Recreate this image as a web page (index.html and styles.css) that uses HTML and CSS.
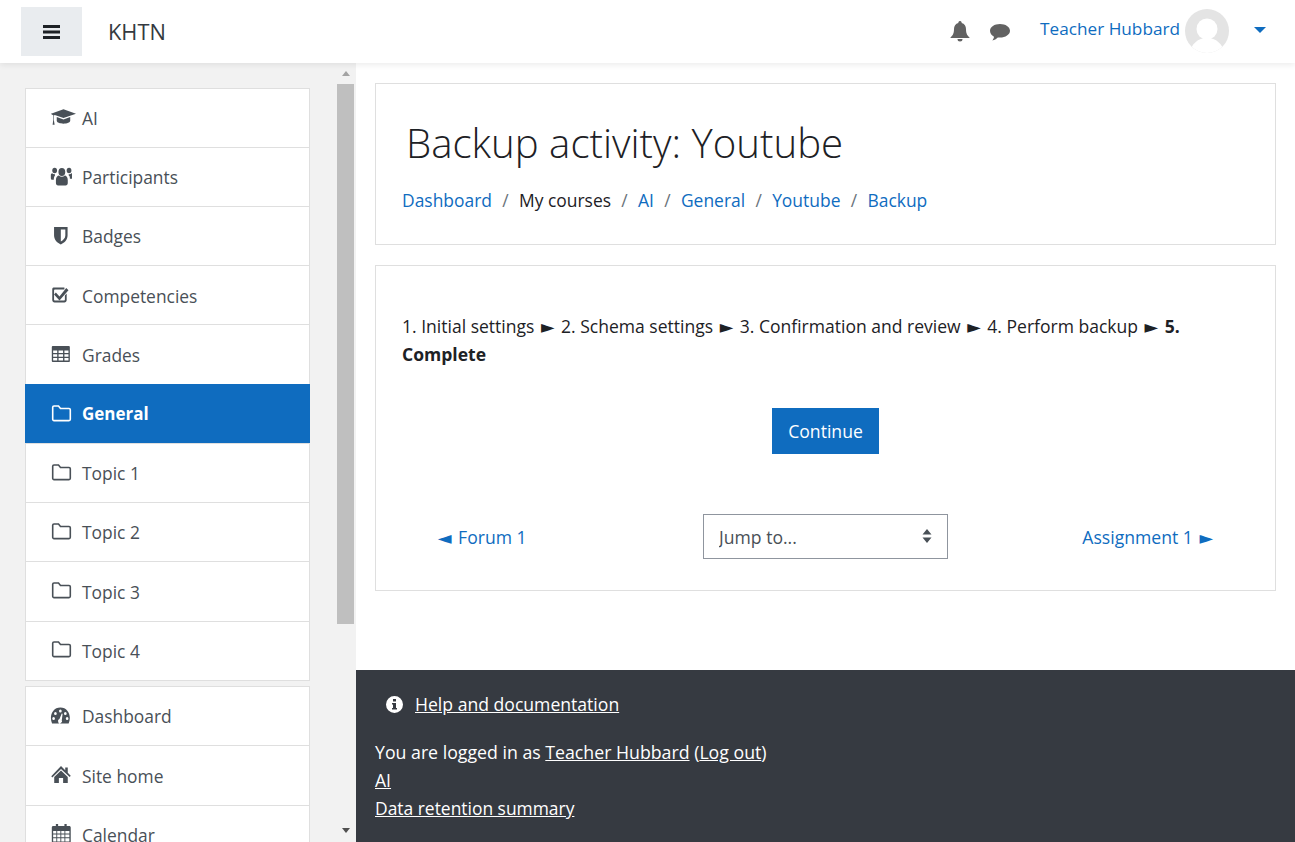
FILE: index.html
```html
<!DOCTYPE html>
<html>
	<head>
		<meta charset="utf-8">
		<title>Backup activity: Youtube</title>
		<link rel="stylesheet" href="styles.css">
	</head>
	<body>
		<header class="topbar">
			<button class="menu-btn" type="button">
				<svg width="17" height="14" viewBox="0 0 17 14"><path d="M0 0h17v3H0zM0 5.500h17v3H0zM0 11h17v3H0z" fill="#1d2125"/></svg>
			</button>
			<span class="brand">KHTN</span>
			<div class="top-right">
				<svg class="top-icon" width="20" height="21" viewBox="0 0 20 21"><path d="M10 0a1.600 1.600 0 0 1 1.600 2.100C14.600 2.800 16 5.200 16 8c0 5 1.500 6.500 3.500 8.500V17H.5v-.5C2.500 14.500 4 13 4 8c0-2.800 1.400-5.200 4.400-5.900A1.600 1.600 0 0 1 10 0zM7.500 18h5a2.500 2.500 0 0 1-5 0z" fill="#626262"/></svg>
				<svg class="top-icon chat" width="20" height="17" viewBox="0 0 20 17"><path d="M10 0c5.500 0 10 2.900 10 6.800s-4.500 6.800-10 6.800c-.8 0-1.500-.1-2.200-.2C6.300 14.800 4.500 16 2.300 16.500c.8-1 1.500-2 1.700-3.700C1.600 11.500 0 9.300 0 6.800 0 2.900 4.500 0 10 0z" fill="#626262"/></svg>
				<a class="user-name" href="#">Teacher Hubbard</a>
				<svg class="avatar" width="44" height="44" viewBox="0 0 44 44"><defs><clipPath id="av"><circle cx="22" cy="22" r="22"/></clipPath></defs><circle cx="22" cy="22" r="22" fill="#e4e4e4"/><g clip-path="url(#av)" fill="#fff"><circle cx="22" cy="20" r="10.500"/><path d="M5 44c1-9 8-15 17-15s16 6 17 15z"/></g></svg>
				<span class="caret"></span>
			</div>
		</header>

		<div class="page">
			<aside class="sidebar">
				<div class="side-lists">
					<ul class="side-card">
						<li><svg class="ico cap" width="26" height="19" viewBox="-1 0 27 19"><path d="M13 1 26 5.500 13 10 4 6.900 3 7.400V12l.8 5H1.700l.7-5V7C1.500 6.700.5 6 0 5.500zM6 9l7 2.500L20 9v4c0 1.800-3.500 3-7 3s-7-1.200-7-3z"/></svg>AI</li>
						<li><svg class="ico" width="22" height="19" viewBox="-1 0 26 19" preserveAspectRatio="none"><circle cx="13" cy="5" r="4"/><circle cx="4.500" cy="3.500" r="2.800"/><circle cx="21.500" cy="3.500" r="2.800"/><path d="M6 13c0-3 2-4.500 3.500-4.500 1 .8 2.200 1.200 3.500 1.200s2.500-.4 3.500-1.200C18 8.500 20 10 20 13v3c0 1.500-1 2.500-2.500 2.500h-9C7 18.500 6 17.500 6 16zM0 8c0-1 .8-1.800 1.500-1.800 1 1 2.500 1.300 3.500 1-.3.900-.1.900-.1 1.300C3.500 9.500 3.500 12 3.500 12.800H1.500C.5 12.800 0 12 0 11zM26 8c0-1-.8-1.800-1.500-1.800-1 1-2.500 1.300-3.500 1 .3.900.1.900.1 1.300 1.400 0 1.400 2.500 1.400 3.300h2c1 0 1.500-.8 1.500-1.800z"/></svg>Participants</li>
						<li><svg class="ico" width="22" height="19" viewBox="0 0 24.400 19" preserveAspectRatio="none"><path d="M4.500 1h15v8.500c0 4.500-4 7.500-7.500 9-3.500-1.500-7.500-4.500-7.500-9zM12 3.500v12c2.500-1.300 5-3.300 5-6V3.500z"/></svg>Badges</li>
						<li><svg class="ico" width="22" height="19" viewBox="1 0 24.400 19" preserveAspectRatio="none"><path d="M5 2.500h12v2H6.500C6 4.500 5.500 5 5.500 5.500v9c0 .6.500 1 1 1h10c.6 0 1-.4 1-1v-4l2-2v6.500c0 1.400-1.100 2.500-2.500 2.500H6c-1.400 0-2.500-1.100-2.500-2.500V5C3.500 3.600 3.600 2.500 5 2.500z"/><path d="m7.500 7.500 4 4 7.500-8.500 2.500 2.200L11.500 15.500 5.500 9.500z"/></svg>Competencies</li>
						<li><svg class="ico" width="22" height="19" viewBox="1 0 24.400 19" preserveAspectRatio="none"><path fill-rule="evenodd" d="M4 2h18c.6 0 1 .4 1 1v14c0 .6-.4 1-1 1H4c-.6 0-1-.4-1-1V3c0-.6.400-1 1-1zM4.500 6.500v2.500H9V6.500zm6 0v2.500h5V6.500zm6.500 0v2.500h4.500V6.500zM4.500 10.300v2.500H9v-2.500zm6 0v2.500h5v-2.500zm6.500 0v2.500h4.500v-2.500zM4.500 14v2.500H9V14zm6 0v2.500h5V14zm6.500 0v2.500h4.500V14z"/></svg>Grades</li>
						<li class="active"><svg class="ico" width="22" height="19" viewBox="0 0 22 19"><path class="folder" d="M4 2h4.500l2 2.500h8.500c.7 0 1.300.6 1.300 1.300v9.500c0 .7-.6 1.300-1.300 1.300H4c-.7 0-1.300-.6-1.300-1.300V3.300C2.700 2.600 3.300 2 4 2z"/></svg>General</li>
						<li><svg class="ico" width="22" height="19" viewBox="0 0 22 19"><path class="folder" d="M4 2h4.500l2 2.500h8.500c.7 0 1.300.6 1.300 1.300v9.500c0 .7-.6 1.300-1.300 1.300H4c-.7 0-1.300-.6-1.300-1.300V3.300C2.700 2.600 3.300 2 4 2z"/></svg>Topic 1</li>
						<li><svg class="ico" width="22" height="19" viewBox="0 0 22 19"><path class="folder" d="M4 2h4.500l2 2.500h8.500c.7 0 1.300.6 1.300 1.300v9.500c0 .7-.6 1.300-1.300 1.300H4c-.7 0-1.300-.6-1.300-1.300V3.300C2.700 2.600 3.300 2 4 2z"/></svg>Topic 2</li>
						<li><svg class="ico" width="22" height="19" viewBox="0 0 22 19"><path class="folder" d="M4 2h4.500l2 2.500h8.500c.7 0 1.300.6 1.300 1.300v9.500c0 .7-.6 1.300-1.300 1.300H4c-.7 0-1.300-.6-1.300-1.300V3.300C2.700 2.600 3.300 2 4 2z"/></svg>Topic 3</li>
						<li><svg class="ico" width="22" height="19" viewBox="0 0 22 19"><path class="folder" d="M4 2h4.500l2 2.500h8.500c.7 0 1.300.6 1.300 1.300v9.500c0 .7-.6 1.300-1.300 1.300H4c-.7 0-1.300-.6-1.300-1.300V3.300C2.700 2.600 3.300 2 4 2z"/></svg>Topic 4</li>
					</ul>
					<ul class="side-card site-card">
						<li><svg class="ico" width="22" height="19" viewBox="1.500 0 24.400 19" preserveAspectRatio="none"><path fill-rule="evenodd" d="M13 1.500c6.600 0 10.500 5 10.500 10.500 0 2-.5 3.800-1.300 5.500H3.800C3 15.800 2.500 14 2.500 12 2.500 6.500 6.400 1.500 13 1.500zM13 3.500a1.500 1.500 0 1 0 0 3 1.500 1.500 0 0 0 0-3zM7.500 6a1.500 1.500 0 1 0 0 3 1.500 1.500 0 0 0 0-3zM18.500 6a1.500 1.500 0 1 0 0 3 1.500 1.500 0 0 0 0-3zM5.500 11a1.500 1.500 0 1 0 0 3 1.500 1.500 0 0 0 0-3zM20.500 11a1.500 1.500 0 1 0 0 3 1.500 1.500 0 0 0 0-3zM14.500 7.500 12 13a2.200 2.200 0 1 0 2.500 1 .5.500 0 0 0 .2-.5l.8-5.800z"/></svg>Dashboard</li>
						<li><svg class="ico" width="22" height="19" viewBox="0 0 26 19" preserveAspectRatio="none"><path d="M13 1 18 5.200V2.500h3v5.200l3.500 3-1.200 1.300L13 4 2.700 12.500 1.500 11.200zM13 5.500l8 6.500v6h-5.500v-5h-5v5H5v-6z"/></svg>Site home</li>
						<li><svg class="ico" width="22" height="19" viewBox="0.500 0 24.400 19" preserveAspectRatio="none"><path fill-rule="evenodd" d="M7 0h2.500v2h7V0H19v2h3c.8 0 1.500.7 1.500 1.500v14c0 .8-.7 1.500-1.500 1.500H4c-.8 0-1.500-.7-1.500-1.500v-14C2.500 2.700 3.200 2 4 2h3zM4 7v2.500h3.500V7zm4.500 0v2.500H12V7zM13 7v2.500h3.500V7zm4.500 0v2.500H22V7zM4 10.500v2.800h3.500v-2.800zm4.500 0v2.800H12v-2.800zm4.500 0v2.800h3.500v-2.800zm4.500 0v2.800H22v-2.800zM4 14.300v3.200h3.500v-3.200zm4.500 0v3.200H12v-3.200zm4.500 0v3.200h3.500v-3.200zm4.500 0v3.200H22v-3.200z"/></svg>Calendar</li>
					</ul>
				</div>
				<div class="scrollbar">
					<span class="sb-up"></span>
					<div class="sb-track"><div class="sb-thumb"></div></div>
					<span class="sb-down"></span>
				</div>
			</aside>

			<div class="main-col">
				<main class="content">
					<section class="card head-card">
						<h1>Backup activity: Youtube</h1>
						<nav class="crumbs">
							<a href="#">Dashboard</a><span class="sep">/</span><span>My courses</span><span class="sep">/</span><a href="#">AI</a><span class="sep">/</span><a href="#">General</a><span class="sep">/</span><a href="#">Youtube</a><span class="sep">/</span><a href="#">Backup</a>
						</nav>
					</section>
					<section class="card body-card">
						<p class="steps">1. Initial settings <span class="arr">►</span> 2. Schema settings <span class="arr">►</span> 3. Confirmation and review <span class="arr">►</span> 4. Perform backup <span class="arr">►</span> <b>5.</b> <b>Complete</b></p>
						<div class="btn-row"><button class="btn" type="button">Continue</button></div>
						<div class="jump-row">
							<a href="#" class="prev"><span class="arr">◄</span> Forum 1</a>
							<div class="select-wrap">
								<select class="jump"><option>Jump to...</option></select>
								<svg class="sel-arrows" width="10" height="14" viewBox="0 0 10 14"><path d="M5 0l4.500 5.500h-9zM5 14 .5 8.500h9z" fill="#495057"/></svg>
							</div>
							<a href="#" class="next">Assignment 1 <span class="arr">►</span></a>
						</div>
					</section>
				</main>
				<footer class="footer">
					<div class="help">
						<svg width="17" height="17" viewBox="0 0 17 17"><path fill-rule="evenodd" d="M8.500 0a8.500 8.500 0 1 1 0 17 8.500 8.500 0 0 1 0-17zM7 3v2.500h3V3zM6 7v1.500h1V12H6v1.500h5V12h-1V7z" fill="#fff"/></svg>
						<a href="#">Help and documentation</a>
					</div>
					<div class="login-info">You are logged in as <a href="#">Teacher Hubbard</a> (<a href="#">Log out</a>)</div>
					<div><a href="#">AI</a></div>
					<div class="retention"><a href="#">Data retention summary</a></div>
				</footer>
			</div>
		</div>
	</body>
</html>
```

FILE: styles.css
```css
*{margin: 0;padding: 0;box-sizing: border-box;}
ul{list-style: none;}
a{color: #0f6cbf;text-decoration: none;}
html,body{height: 100%;overflow: hidden;}
body{
	display: flex;
	flex-direction: column;
	font-family: "Open Sans","Noto Sans",sans-serif;
	font-size: 17.6px;
	line-height: 28.125px;
	color: #1d2125;
	background: #fff;
}

/* top bar */
.topbar{
	height: 63px;
	flex: none;
	display: flex;
	align-items: center;
	padding-left: 21px;
	background: #fff;
	box-shadow: 0 2px 6px rgba(0,0,0,0.08);
	position: relative;
	z-index: 5;
}
.menu-btn{width: 61px;height: 49px;border: 0;background: #e9ecef;display: flex;align-items: center;justify-content: center;}
.brand{margin-left: 26px;margin-top: 2px;font-size: 21.8px;color: #343a40;}
.top-right{margin-left: auto;display: flex;align-items: center;}
.top-icon{display: block;}
.chat{margin-left: 20px;margin-top: 2px;}
.user-name{margin-left: 30px;margin-top: -4px;font-size: 17.2px;}
.avatar{margin-left: 5px;margin-top: -2px;}
.caret{margin-left: 25px;margin-right: 29px;margin-top: -4px;width: 0;height: 0;border-left: 6.500px solid transparent;border-right: 6.500px solid transparent;border-top: 6px solid #0f6cbf;}

.page{flex: 1;display: flex;min-height: 0;}

/* sidebar */
.sidebar{width: 356px;flex: none;display: flex;background: #f2f2f2;overflow: hidden;}
.side-lists{width: 337px;flex: none;padding: 25px 27px 0 25px;}
.side-card{background: #fff;border: 1px solid #dfdfdf;margin-bottom: 5px;}
.side-card li{
	display: flex;
	align-items: center;
	height: 59.22px;
	padding-left: 24px;
	padding-top: 0.6px;
	border-top: 1px solid #dfdfdf;
	color: #495057;
	font-size: 17.4px;
}
.side-card li:first-child{border-top: 0;height: 57.8px;}
.site-card li:first-child{height: 58.6px;}
.side-card .active{background: #0f6cbf;color: #fff;font-weight: 700;font-size: 17px;margin: 0 -1px;padding-left: 25px;border-top-color: #0f6cbf;}
.ico{flex: none;margin-right: 10px;margin-top: -2px;fill: #495057;}
.cap{margin-right: 6px;}
.folder{fill: none;stroke: #495057;stroke-width: 1.600;}
.active .folder{stroke: #fff;}

.scrollbar{width: 17px;flex: none;display: flex;flex-direction: column;align-items: stretch;}
.sb-track{flex: 1;}
.sb-thumb{height: 540px;background: #bfbfbf;}
.sb-up,.sb-down{flex: none;display: flex;justify-content: center;align-items: center;}
.sb-up{height: 21px;}
.sb-down{height: 24px;}
.sb-up::before{content: "";border-left: 4.500px solid transparent;border-right: 4.500px solid transparent;border-bottom: 5px solid #a3a3a3;}
.sb-down::before{content: "";border-left: 4.500px solid transparent;border-right: 4.500px solid transparent;border-top: 5px solid #505050;}

/* main column */
.main-col{flex: 1;min-width: 0;display: flex;flex-direction: column;}
.content{flex: 1;padding: 20px 19px 0;}
.card{border: 1px solid #dfdfdf;background: #fff;}
.head-card{height: 162px;padding: 30px 26px 0 30px;margin-bottom: 20px;}
h1{font-size: 40.2px;font-weight: 300;line-height: 58px;color: #1d2125;}
.crumbs{margin-top: 14px;margin-left: -4px;font-size: 17.45px;color: #1d2125;}
.sep{margin: 0 10.300px;color: #6a737b;}
.body-card{height: 326px;padding: 46px 26px 0;}
.steps{line-height: 28px;font-size: 17.55px;}
.arr{font-family: "DejaVu Sans",sans-serif;font-size: 17.6px;line-height: 1;margin: 0 2px;}
.prev .arr{margin-left: 0;}
.next .arr{margin-right: 0;}
.btn-row{display: flex;justify-content: center;margin-top: 40px;}
.btn{width: 107px;height: 46px;border: 0;background: #0f6cbf;color: #fff;font: inherit;}
.jump-row{display: grid;grid-template-columns: 1fr 245px 1fr;align-items: center;margin-top: 60px;padding: 0 36px;}
.jump-row a{padding-top: 1px;}
.next{justify-self: end;}
.select-wrap{position: relative;height: 45px;}
.jump{
	appearance: none;
	width: 100%;
	height: 100%;
	border: 1px solid #8f959e;
	border-radius: 0;
	background: #fff;
	padding: 2px 0 0 15px;
	color: #495057;
	font: inherit;
}
.sel-arrows{position: absolute;right: 16px;top: 15px;}

/* footer */
.footer{height: 172px;flex: none;background: #363a41;color: #fff;padding: 20px 19px 0;}
.footer a{color: #fff;text-decoration: underline;}
.help{display: flex;align-items: center;gap: 12px;padding-left: 11px;margin-bottom: 20px;}
.login-info{font-size: 17.73px;}
.retention{font-size: 17.43px;}
```
